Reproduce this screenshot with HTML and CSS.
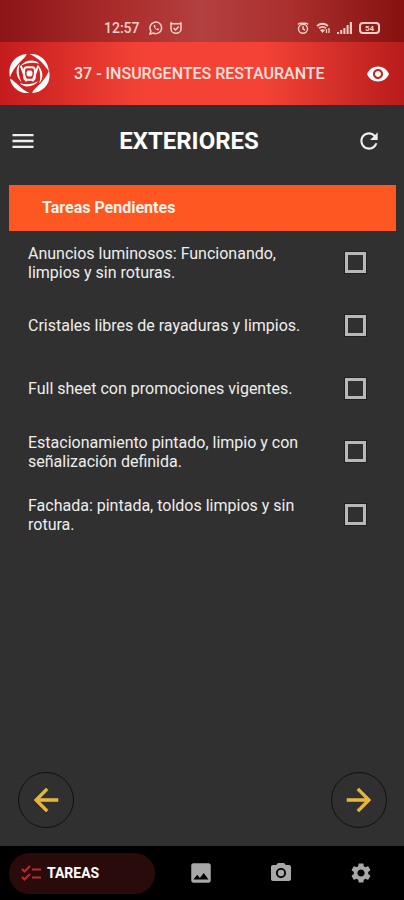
FILE: index.html
```html
<!DOCTYPE html>
<html lang="es">
<head>
<meta charset="utf-8">
<meta name="viewport" content="width=device-width, initial-scale=1">
<title>Exteriores</title>
<link rel="stylesheet" href="styles.css">
</head>
<body>
<div class="app">
  <div class="status">
    <div class="status-left">
      <span class="clock">12:57</span>
      <svg width="14" height="14" viewBox="0 0 14 14" fill="none" stroke="currentColor" stroke-width="1.500"><path d="M1 13l.9-3.100A5.800 5.800 0 1 1 4.200 12z"/><path d="M4.800 4.200c-.5 2.300 2.400 5.200 4.900 5l.6-1.100-1.600-.9-.8.8C6.800 7.500 6.400 7 6 6.100l.7-.7-.7-1.600z" fill="currentColor" stroke="none"/></svg>
      <svg width="12" height="12" viewBox="0 0 12 12" fill="none" stroke="currentColor" stroke-width="1.500"><path d="M1 3V1l2 .7h6L11 1v6a5 4.300 0 0 1-10 0V3"/><path d="M3.500 6l2 2 3.200-3.500"/></svg>
    </div>
    <div class="status-right">
      <svg width="12" height="12" viewBox="0 0 12 12" fill="none" stroke="currentColor" stroke-width="1.400"><circle cx="6" cy="6.700" r="4.500"/><path d="M1 2.500L2.500 1M11 2.500L9.500 1M2.800 1.200h6.400M6 4v3l2 1"/></svg>
      <svg width="14" height="12" viewBox="0 0 14 12" fill="none" stroke="currentColor" stroke-width="1.800"><path d="M1 4q5.500-4.500 11 0M3 6.300q3.500-2.800 7 0"/><path d="M4 8L6.500 11 9 8q-2.500-1.500-5 0z" fill="currentColor" stroke="none"/><path d="M10.500 7v4M13 6v5" stroke-width="1.300"/></svg>
      <svg width="15" height="12" viewBox="0 0 15 12" fill="currentColor"><path d="M0 10h2v2H0zM3.200 8h2v4h-2zM6.400 6h2v6h-2zM9.600 3h2v9h-2zM12.800 0H15v12h-2.200z"/></svg>
      <span class="battery"><span>54</span></span>
    </div>
  </div>
  <header class="header">
    <svg class="logo" viewBox="0 0 42 42" fill="#fff">
      <path d="M1 25C-2 11 7 2 18 1 18 5 6 11 1 25z"/>
      <path d="M21 1C32 0 40 8 41 19 35 10 30 5 21 1z"/>
      <path d="M41 18C44 31 35 40 24 41 24 37 36 31 41 18z"/>
      <path d="M21 41C10 42 2 34 1 26 8 30 12 37 21 41z"/>
      <path d="M12 13C17 7 26 6 31 11 24 9 18 10 12 13z"/>
      <path d="M29 12C35 17 36 26 31 31 33 24 32 18 29 12z"/>
      <path d="M30 29C25 35 16 36 11 31 18 33 24 32 30 29z"/>
      <path d="M13 30C7 25 6 16 11 11 9 18 10 24 13 30z"/>
      <g fill="none" stroke="#fff" stroke-width="2">
        <path d="M12 13l6 16M30 13l-6 16"/>
        <rect x="15.500" y="14.500" width="11" height="13" rx="3"/>
      </g>
      <rect x="18" y="18" width="6" height="6" rx="2"/>
    </svg>
    <span class="store">37 - INSURGENTES RESTAURANTE</span>
    <button class="icon-btn" type="button" aria-label="Ver">
      <svg width="24" height="24" viewBox="0 0 24 24" fill="currentColor"><path d="M12 4.500C7 4.500 2.730 7.610 1 12c1.730 4.390 6 7.500 11 7.500s9.270-3.110 11-7.500c-1.730-4.390-6-7.500-11-7.500zM12 17c-2.760 0-5-2.240-5-5s2.240-5 5-5 5 2.240 5 5-2.240 5-5 5zm0-8c-1.660 0-3 1.340-3 3s1.340 3 3 3 3-1.340 3-3-1.340-3-3-3z"/></svg>
    </button>
  </header>
  <main class="main">
    <div class="toolbar">
      <button class="icon-btn" type="button" aria-label="Menú">
        <svg width="28" height="28" viewBox="0 0 24 24" fill="currentColor"><path d="M3 18h18v-2H3v2zm0-5h18v-2H3v2zm0-7v2h18V6H3z"/></svg>
      </button>
      <h1 class="title">EXTERIORES</h1>
      <button class="icon-btn" type="button" aria-label="Actualizar">
        <svg width="26" height="26" viewBox="0 0 24 24" fill="currentColor"><path d="M17.650 6.350C16.200 4.900 14.210 4 12 4c-4.420 0-7.990 3.580-7.990 8s3.570 8 7.990 8c3.730 0 6.840-2.550 7.730-6h-2.080c-.82 2.330-3.040 4-5.650 4-3.310 0-6-2.690-6-6s2.690-6 6-6c1.660 0 3.140.69 4.220 1.780L13 11h7V4l-2.350 2.350z"/></svg>
      </button>
    </div>
    <h2 class="banner">Tareas Pendientes</h2>
    <ul class="tasks">
      <li><label class="task"><span>Anuncios luminosos: Funcionando, limpios y sin roturas.</span><input type="checkbox"></label></li>
      <li><label class="task"><span>Cristales libres de rayaduras y limpios.</span><input type="checkbox"></label></li>
      <li><label class="task"><span>Full sheet con promociones vigentes.</span><input type="checkbox"></label></li>
      <li><label class="task"><span>Estacionamiento pintado, limpio y con señalización definida.</span><input type="checkbox"></label></li>
      <li><label class="task"><span>Fachada: pintada, toldos limpios y sin rotura.</span><input type="checkbox"></label></li>
    </ul>
    <div class="pager">
      <button class="round" type="button" aria-label="Anterior">
        <svg width="36" height="36" viewBox="0 0 24 24" fill="currentColor" stroke="currentColor" stroke-width=".4"><path d="M20 11H7.830l5.590-5.590L12 4l-8 8 8 8 1.410-1.410L7.830 13H20v-2z"/></svg>
      </button>
      <button class="round" type="button" aria-label="Siguiente">
        <svg width="36" height="36" viewBox="0 0 24 24" fill="currentColor" stroke="currentColor" stroke-width=".4"><path d="M12 4l-1.410 1.410L16.170 11H4v2h12.170l-5.580 5.590L12 20l8-8z"/></svg>
      </button>
    </div>
  </main>
  <nav class="nav">
    <button class="tab active" type="button">
      <svg width="20" height="16" viewBox="0 0 20 16" fill="none" stroke="currentColor" stroke-width="2"><path d="M1 4l2.500 2.500L9 1M1 12l2.500 2.500L9 9M11 4.500h9M11 12.500h9"/></svg>
      TAREAS
    </button>
    <button class="tab" type="button" aria-label="Imágenes">
      <svg width="26" height="26" viewBox="0 0 24 24" fill="currentColor"><path d="M21 19V5c0-1.100-.9-2-2-2H5c-1.100 0-2 .9-2 2v14c0 1.100.9 2 2 2h14c1.100 0 2-.9 2-2zM8.500 13.500l2.500 3.010L14.500 12l4.500 6H5l3.500-4.500z"/></svg>
    </button>
    <button class="tab" type="button" aria-label="Cámara">
      <svg width="24" height="24" viewBox="0 0 24 24" fill="currentColor"><path d="M9 2L7.170 4H4c-1.100 0-2 .9-2 2v12c0 1.100.9 2 2 2h16c1.100 0 2-.9 2-2V6c0-1.100-.9-2-2-2h-3.170L15 2H9zm3 15c-2.760 0-5-2.240-5-5s2.240-5 5-5 5 2.240 5 5-2.240 5-5 5z"/><circle cx="12" cy="12" r="3.200"/></svg>
    </button>
    <button class="tab" type="button" aria-label="Ajustes">
      <svg width="24" height="24" viewBox="0 0 24 24" fill="currentColor"><path d="M19.140 12.940c.04-.3.060-.61.060-.94 0-.32-.02-.64-.07-.94l2.030-1.580c.18-.14.23-.41.120-.61l-1.920-3.320c-.12-.22-.37-.29-.59-.22l-2.390.96c-.5-.38-1.030-.7-1.620-.94l-.36-2.540c-.04-.24-.24-.41-.48-.41h-3.840c-.24 0-.43.17-.47.41l-.36 2.540c-.59.24-1.130.57-1.620.94l-2.390-.96c-.22-.08-.47 0-.59.22L2.740 8.870c-.12.21-.08.47.12.61l2.030 1.580c-.05.3-.09.63-.09.94s.02.64.07.94l-2.030 1.580c-.18.14-.23.41-.12.61l1.920 3.320c.12.22.37.29.59.22l2.390-.96c.5.38 1.030.7 1.620.94l.36 2.540c.05.24.24.41.48.41h3.840c.24 0 .44-.17.47-.41l.36-2.540c.59-.24 1.130-.56 1.620-.94l2.390.96c.22.08.47 0 .59-.22l1.920-3.320c.12-.22.070-.47-.12-.61l-2.010-1.580zM12 15.600c-1.980 0-3.600-1.620-3.600-3.600s1.620-3.600 3.600-3.600 3.600 1.620 3.600 3.600-1.620 3.600-3.600 3.600z"/></svg>
    </button>
  </nav>
</div>
</body>
</html>
```
FILE: styles.css
```css
* {
  box-sizing: border-box;
}

body {
  margin: 0;
  background: #303030;
  color: #fff;
  font-family: Roboto, sans-serif;
}

button {
  padding: 0;
  border: 0;
  background: none;
  color: inherit;
  font: inherit;
}

svg {
  display: block;
}

.app {
  display: flex;
  flex-direction: column;
  min-height: 100vh;
}

.status {
  display: flex;
  justify-content: space-between;
  height: 42px;
  padding: 14px 24px 0 104px;
  background: linear-gradient(90deg, #8c1518, #ab2d2b 30%, #b34040 50%, #aa2f2d 72%, #86120f);
  color: #f7cfc8;
}

.status-left,
.status-right {
  display: flex;
  align-items: center;
  height: 28px;
  gap: 7px;
}

.clock {
  margin-right: 2px;
  font-size: 14px;
  font-weight: 500;
}

.battery {
  display: flex;
  align-items: center;
  justify-content: center;
  width: 21px;
  height: 12px;
  border: 2px solid currentColor;
  border-radius: 4px;
  font-size: 8px;
  font-weight: 700;
}

.header {
  display: flex;
  align-items: center;
  height: 63px;
  padding: 0 14px 0 9px;
  background: linear-gradient(90deg, #c41c1d, #f44336 35%, #f44336 65%, #b71c1c);
}

.logo {
  width: 41px;
  height: 41px;
}

.store {
  flex: 1;
  padding-left: 24px;
  color: #ffe0dc;
  font-size: 16px;
  font-weight: 500;
  white-space: nowrap;
}

.main {
  display: flex;
  flex: 1;
  flex-direction: column;
}

.toolbar {
  display: flex;
  align-items: center;
  height: 72px;
  margin-bottom: 8px;
  padding: 0 22px 0 9px;
  color: #eee;
}

.title {
  flex: 1;
  margin: 0;
  padding-right: 15px;
  color: #fff;
  font-size: 24px;
  font-weight: 700;
  text-align: center;
}

.banner {
  margin: 0 8px 0 9px;
  padding: 0 33px;
  background: #ff5722;
  color: #fff3ea;
  font-size: 16px;
  font-weight: 700;
  line-height: 46px;
}

.tasks {
  margin: 0;
  padding: 0;
  list-style: none;
}

.task {
  display: flex;
  align-items: center;
  justify-content: space-between;
  height: 63px;
  padding: 0 38px 0 28px;
  color: #eee;
  font-size: 16px;
  line-height: 19px;
}

.task span {
  max-width: 280px;
}

.task input {
  flex: none;
  width: 21px;
  height: 21px;
  margin: 0;
  border: 3px solid #b8b8b8;
  outline: 1px solid #202020;
  appearance: none;
}

.task input:checked {
  background: #ff5722;
}

.pager {
  display: flex;
  justify-content: space-between;
  margin-top: auto;
  padding: 0 17px 18px 18px;
}

.round {
  display: flex;
  align-items: center;
  justify-content: center;
  width: 56px;
  height: 56px;
  border: 1px solid #101010;
  border-radius: 50%;
  color: #e3b73c;
}

.nav {
  display: flex;
  align-items: center;
  height: 54px;
  padding: 0 3px 0 9px;
  background: #000;
  color: #a8a8a8;
}

.tab {
  display: flex;
  flex: 1;
  align-items: center;
  justify-content: center;
  height: 41px;
}

.tab.active {
  flex: none;
  justify-content: flex-start;
  gap: 6px;
  width: 146px;
  margin-right: 6px;
  padding-left: 12px;
  border-radius: 21px;
  background: #290b0b;
  color: #fff;
  font-size: 14px;
  font-weight: 700;
}

.tab.active svg {
  color: #b52f2f;
}
```
